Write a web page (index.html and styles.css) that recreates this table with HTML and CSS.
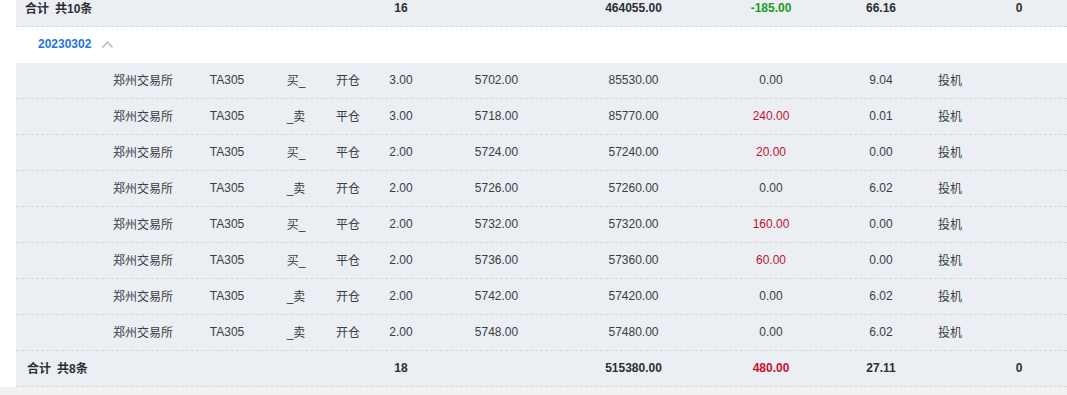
FILE: index.html
```html
<!DOCTYPE html>
<html lang="zh">
<head>
<meta charset="utf-8">
<link rel="stylesheet" href="styles.css">
</head>
<body>
<div class="page">
  <div class="table">
    <div class="row sum first">
      <div class="label">合计<span class="gap"></span>共10条</div>
      <div class="c">16</div>
      <div class="c"></div>
      <div class="c">464055.00</div>
      <div class="c green">-185.00</div>
      <div class="c">66.16</div>
      <div class="c"></div>
      <div class="c">0</div>
    </div>
    <div class="date-row">
      <span class="date">20230302</span>
      <svg class="chev" width="11" height="7" viewBox="0 0 11 7"><polyline points="0.5,6.5 5.5,1.2 10.5,6.5" fill="none" stroke="#a8abb2" stroke-width="1.2"/></svg>
    </div>
    <div class="row"><div></div><div class="c">郑州交易所</div><div class="c">TA305</div><div class="c">买_</div><div class="c">开仓</div><div class="c">3.00</div><div class="c">5702.00</div><div class="c">85530.00</div><div class="c">0.00</div><div class="c">9.04</div><div class="c">投机</div><div></div></div>
    <div class="row"><div></div><div class="c">郑州交易所</div><div class="c">TA305</div><div class="c">_卖</div><div class="c">平仓</div><div class="c">3.00</div><div class="c">5718.00</div><div class="c">85770.00</div><div class="c red">240.00</div><div class="c">0.01</div><div class="c">投机</div><div></div></div>
    <div class="row"><div></div><div class="c">郑州交易所</div><div class="c">TA305</div><div class="c">买_</div><div class="c">平仓</div><div class="c">2.00</div><div class="c">5724.00</div><div class="c">57240.00</div><div class="c red">20.00</div><div class="c">0.00</div><div class="c">投机</div><div></div></div>
    <div class="row"><div></div><div class="c">郑州交易所</div><div class="c">TA305</div><div class="c">_卖</div><div class="c">开仓</div><div class="c">2.00</div><div class="c">5726.00</div><div class="c">57260.00</div><div class="c">0.00</div><div class="c">6.02</div><div class="c">投机</div><div></div></div>
    <div class="row"><div></div><div class="c">郑州交易所</div><div class="c">TA305</div><div class="c">买_</div><div class="c">平仓</div><div class="c">2.00</div><div class="c">5732.00</div><div class="c">57320.00</div><div class="c red">160.00</div><div class="c">0.00</div><div class="c">投机</div><div></div></div>
    <div class="row"><div></div><div class="c">郑州交易所</div><div class="c">TA305</div><div class="c">买_</div><div class="c">平仓</div><div class="c">2.00</div><div class="c">5736.00</div><div class="c">57360.00</div><div class="c red">60.00</div><div class="c">0.00</div><div class="c">投机</div><div></div></div>
    <div class="row"><div></div><div class="c">郑州交易所</div><div class="c">TA305</div><div class="c">_卖</div><div class="c">开仓</div><div class="c">2.00</div><div class="c">5742.00</div><div class="c">57420.00</div><div class="c">0.00</div><div class="c">6.02</div><div class="c">投机</div><div></div></div>
    <div class="row"><div></div><div class="c">郑州交易所</div><div class="c">TA305</div><div class="c">_卖</div><div class="c">开仓</div><div class="c">2.00</div><div class="c">5748.00</div><div class="c">57480.00</div><div class="c">0.00</div><div class="c">6.02</div><div class="c">投机</div><div></div></div>
    <div class="row sum">
      <div class="label last">合计<span class="gap"></span>共8条</div>
      <div class="c">18</div>
      <div class="c"></div>
      <div class="c">515380.00</div>
      <div class="c red">480.00</div>
      <div class="c">27.11</div>
      <div class="c"></div>
      <div class="c">0</div>
    </div>
  </div>
  <div class="scrollbar"></div>
</div>
</body>
</html>
```
FILE: styles.css
```css
html, body {
  margin: 0;
  padding: 0;
  background: #ffffff;
  overflow: hidden;
}
body {
  font-family: "Liberation Sans", Arial, "Noto Sans CJK SC", sans-serif;
  font-size: 12px;
  color: #3a3d44;
}
.page {
  width: 1067px;
  height: 395px;
  overflow: hidden;
  display: flex;
  flex-direction: column;
}
.table {
  margin-left: 16px;
  margin-top: -9px;
  display: flex;
  flex-direction: column;
}
.row {
  display: grid;
  grid-template-columns: 85px 84px 84px 54px 50px 56px 135px 139px 136px 84px 54px 84px 1fr;
  height: 36px;
  box-sizing: border-box;
  border-bottom: 1px dashed #d3d6dc;
  background: #ebeef3;
  align-items: center;
  padding-bottom: 2px;
}
.c {
  text-align: center;
  white-space: nowrap;
}
.sum {
  font-weight: bold;
  color: #2b2e33;
}
.label {
  grid-column: 1 / span 5;
  padding-left: 9px;
  white-space: nowrap;
}
.label.last {
  padding-left: 11px;
}
.gap {
  display: inline-block;
  width: 6px;
}
.red { color: #c8102e; }
.green { color: #1aa01a; }
.date-row {
  height: 36px;
  box-sizing: border-box;
  padding-bottom: 2px;
  background: #ffffff;
  display: flex;
  align-items: center;
  margin-left: -16px;
  padding-left: 38px;
}
.date {
  color: #1f74e0;
  font-weight: bold;
}
.chev {
  margin-left: 11px;
  margin-top: 1px;
}
.scrollbar {
  height: 8px;
  background: #f1f1f1;
  flex: 1;
}
```
